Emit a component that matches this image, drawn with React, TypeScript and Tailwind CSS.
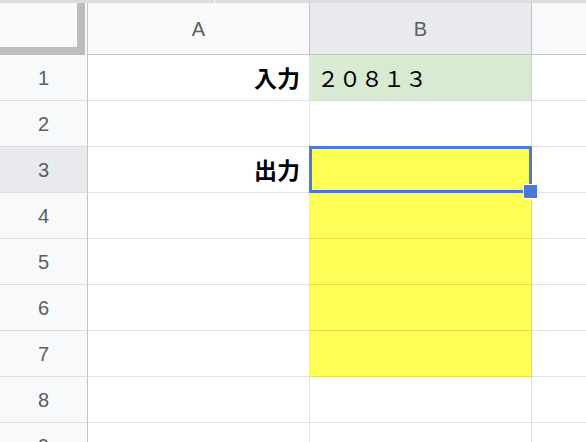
import React from "react";

const rows = [1, 2, 3, 4, 5, 6, 7, 8, 9];

const headerFont = { fontFamily: '"Liberation Sans", Arial, sans-serif' };
const cjkFont = { fontFamily: '"Noto Sans CJK JP", "Liberation Sans", sans-serif' };

const Cell = ({ row, col }: { row: number; col: "A" | "B" | "C" }) => {
  if (col === "A") {
    const label = row === 1 ? "入力" : row === 3 ? "出力" : "";
    return (
      <div
        className="w-[222px] h-full shrink-0 border-r border-b border-[#e2e2e2] bg-white flex items-center justify-end pr-[9px] text-[23px] font-bold text-black"
        style={cjkFont}
      >
        {label}
      </div>
    );
  }
  if (col === "B") {
    if (row === 1) {
      return (
        <div
          className="w-[222px] h-full shrink-0 border-r border-b border-[#cfdcc9] bg-[#d9ead3] flex items-center pl-[7px] text-[22px] text-black"
          style={cjkFont}
        >
          ２０８１３
        </div>
      );
    }
    if (row >= 3 && row <= 7) {
      return (
        <div className="relative w-[222px] h-full shrink-0 border-r border-b border-[#e3df44] bg-[#ffff55]">
          {row === 3 && (
            <>
              <div className="absolute -left-px -top-px -right-px -bottom-px border-[3px] border-[#4a79d9]" />
              <div className="absolute -right-[7px] -bottom-[7px] w-[15px] h-[15px] bg-[#4a79d9] border border-white z-10" />
            </>
          )}
        </div>
      );
    }
    return <div className="w-[222px] h-full shrink-0 border-r border-b border-[#e2e2e2] bg-white" />;
  }
  return <div className="flex-1 h-full border-b border-[#e2e2e2] bg-white" />;
};

export default function App() {
  return (
    <div className="w-[586px] h-[442px] overflow-hidden bg-white" style={headerFont}>
      <div className="relative h-[3px] bg-[#dcdcdc]">
        <div className="absolute left-[214px] top-0 w-px h-[3px] bg-white" />
      </div>
      <div className="flex h-[52px]">
        <div className="relative w-[88px] shrink-0 bg-[#f8f9fa] border-r border-[#c4c4c4]">
          <div className="absolute left-[77px] top-0 w-[8px] h-full bg-[#bdbdbd]" />
          <div className="absolute left-0 bottom-0 w-[85px] h-[8px] bg-[#bdbdbd]" />
        </div>
        <div className="w-[222px] shrink-0 bg-[#f8f9fa] border-r border-b border-[#c4c4c4] flex items-center justify-center text-[20px] text-[#5a5e63]">
          A
        </div>
        <div className="w-[222px] shrink-0 bg-[#e8eaed] border-r border-b border-[#c4c4c4] flex items-center justify-center text-[20px] text-[#5a5e63]">
          B
        </div>
        <div className="flex-1 bg-[#f8f9fa] border-b border-[#c4c4c4]" />
      </div>
      {rows.map((r) => (
        <div key={r} className="flex h-[46px]">
          <div
            className={`w-[88px] shrink-0 border-r border-b border-r-[#c4c4c4] border-b-[#dadce0] flex items-center justify-center text-[20px] text-[#5a5e63] ${
              r === 3 ? "bg-[#e8eaed]" : "bg-[#f8f9fa]"
            }`}
          >
            {r}
          </div>
          <Cell row={r} col="A" />
          <Cell row={r} col="B" />
          <Cell row={r} col="C" />
        </div>
      ))}
    </div>
  );
}
